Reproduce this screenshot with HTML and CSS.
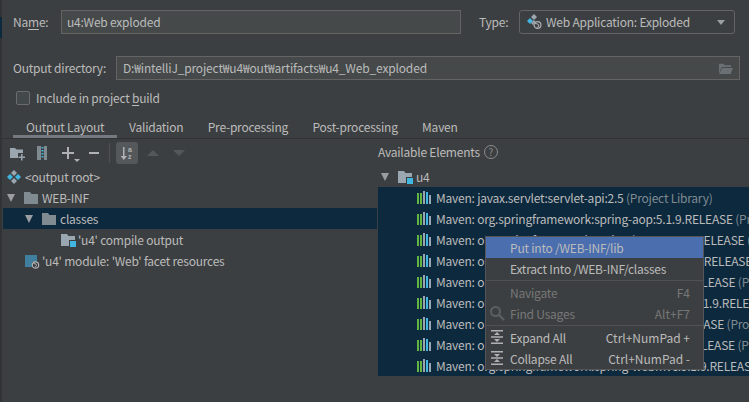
FILE: index.html
```html
<!DOCTYPE html>
<html lang="en">
<head>
<meta charset="utf-8">
<title>Artifact</title>
<link rel="stylesheet" href="styles.css">
</head>
<body>
<div class="page">
  <div class="strip"><div class="strip-sel"></div></div>
  <div class="main">
    <div class="row row-name">
      <label class="lbl lbl-name">Na<u>m</u>e:</label>
      <div class="field field-name">u4:Web exploded</div>
      <label class="lbl lbl-type">Type:</label>
      <div class="combo">
        <svg class="ic16" viewBox="0 0 16 16"><path d="M5 2l3 3-3 3-3-3z" fill="#40b6e0" transform="translate(-1 2)"/><path d="M8 0l3 3-3 3-3-3z" fill="#9aa7b0"/><path d="M8 6l3 3-3 3-3-3z" fill="#9aa7b0"/><circle cx="11.5" cy="11" r="4.2" fill="#3c3f41"/><circle cx="11.5" cy="11" r="3.4" fill="none" stroke="#afb1b3" stroke-width="1.2"/><path d="M9 9.5l3 .5 1 2-2 1.5" fill="none" stroke="#afb1b3"/></svg>
        <span class="combo-text">Web Application: Exploded</span>
        <span class="combo-arrow"></span>
      </div>
    </div>
    <div class="row row-dir">
      <label class="lbl lbl-dir">Output directory:</label>
      <div class="field field-dir">
        <span class="grow path">D:₩intelliJ_project₩u4₩out₩artifacts₩u4_Web_exploded</span>
        <svg class="folder-open" viewBox="0 0 16 14"><path d="M1 2h5l1 1.500h7v2H4L1 12z" fill="#6b7075"/><path d="M4.500 6.500H16L13.500 13H1z" fill="#6b7075"/></svg>
      </div>
    </div>
    <div class="row row-check">
      <span class="check"></span>
      <span class="check-text">Include in project <u>b</u>uild</span>
    </div>
    <div class="tabs">
      <span class="tab tab-on">Output Layout</span>
      <span class="tab">Validation</span>
      <span class="tab">Pre-processing</span>
      <span class="tab">Post-processing</span>
      <span class="tab">Maven</span>
    </div>
    <div class="panes">
      <div class="left">
        <div class="toolbar">
          <svg class="ic16" viewBox="0 0 16 16"><path d="M1 3h5l1.500 1.500H14V8H9v5H1z" fill="#9aa7b0"/><path d="M12 9v2.500h-2.500V13H12v2.500h1.500V13H16v-1.500h-2.500V9z" fill="#9aa7b0"/></svg>
          <svg class="ic16 t-zip" viewBox="0 0 16 16"><path d="M3 1h4v14H3zM10 1h3v14h-3z" fill="#7f8b91"/><path d="M7 1h3v14H7z" fill="#3c3f41"/><path d="M7.500 2h2v1.500h-2zM7.500 5h2v1.500h-2zM7.500 8h2v1.500h-2zM7.500 11h2v1.500h-2z" fill="#40b6e0"/></svg>
          <span class="t-add"><svg class="ic16" viewBox="0 0 16 16"><path d="M7 2h2v5h5v2H9v5H7V9H2V7h5z" fill="#afb1b3"/></svg><i class="mini-arrow"></i></span>
          <svg class="ic16 t-minus" viewBox="0 0 16 16"><path d="M3 7h10v2H3z" fill="#afb1b3"/></svg>
          <span class="t-sep"></span>
          <span class="t-sort"><svg class="ic16" viewBox="0 0 16 16"><path d="M4 2h1.500v9H8l-3.200 4L1.600 11H4z" fill="#afb1b3"/><text x="9" y="7" class="az">a</text><text x="9" y="14" class="az">z</text></svg></span>
          <svg class="ic16 t-up" viewBox="0 0 16 16"><path d="M2 11l6-6 6 6z" fill="#55585a"/></svg>
          <svg class="ic16 t-down" viewBox="0 0 16 16"><path d="M2 5l6 6 6-6z" fill="#55585a"/></svg>
        </div>
        <div class="tree">
          <div class="node node-root">
            <svg class="ic16" viewBox="0 0 16 16"><path d="M4 5l3 3-3 3-3-3z" fill="#40b6e0"/><path d="M12 5l3 3-3 3-3-3z" fill="#40b6e0"/><path d="M8 1l3 3-3 3-3-3z" fill="#9aa7b0"/><path d="M8 9l3 3-3 3-3-3z" fill="#9aa7b0"/></svg>
            <span>&lt;output root&gt;</span>
          </div>
          <div class="node node-web">
            <i class="tw"></i>
            <svg class="ic16 folder" viewBox="0 0 16 16"><path d="M1 2h6l1.500 2H15v10H1z" fill="#7f8b91"/></svg>
            <span>WEB-INF</span>
          </div>
          <div class="node node-sel">
            <i class="tw"></i>
            <svg class="ic16 folder" viewBox="0 0 16 16"><path d="M1 2h6l1.500 2H15v10H1z" fill="#7f8b91"/></svg>
            <span>classes</span>
          </div>
          <div class="node ind2">
            <svg class="ic16" viewBox="0 0 16 16"><path d="M1 2h6l1.500 2H15v4H9v6H1z" fill="#9aa7b0"/><path d="M10 9h6v6h-6z" fill="#40b6e0"/></svg>
            <span>'u4' compile output</span>
          </div>
          <div class="node ind-mod">
            <svg class="ic16" viewBox="0 0 16 16"><path d="M1 2h12v7H8v5H1z" fill="#40809e"/><circle cx="11.500" cy="12" r="3.200" fill="none" stroke="#afb1b3" stroke-width="1.200"/><path d="M9.500 10.500l2.500.5.500 1.500-1.500 2" fill="none" stroke="#afb1b3"/></svg>
            <span>'u4' module: 'Web' facet resources</span>
          </div>
        </div>
      </div>
      <div class="right">
        <div class="avail">
          <span>Available Elements</span>
          <span class="help">?</span>
        </div>
        <div class="node node-u4">
          <i class="tw"></i>
          <svg class="ic16 folder" viewBox="0 0 16 16"><path d="M1 2h6l1.500 2H15v4H9v6H1z" fill="#9aa7b0"/><path d="M10 9h6v6h-6z" fill="#40b6e0"/></svg>
          <span>u4</span>
        </div>
        <div class="libs" id="libs">
          <div class="lib"><svg class="bars" viewBox="0 0 15 13"><use href="#b"/></svg><span>Maven: javax.servlet:servlet-api:2.5 <em>(Project Library)</em></span></div>
          <div class="lib"><svg class="bars" viewBox="0 0 15 13"><use href="#b"/></svg><span>Maven: org.springframework:spring-aop:5.1.9.RELEASE <em>(Project Library)</em></span></div>
          <div class="lib"><svg class="bars" viewBox="0 0 15 13"><use href="#b"/></svg><span>Maven: org.springframework:spring-beans:5.1.9.RELEASE <em>(Project Library)</em></span></div>
          <div class="lib"><svg class="bars" viewBox="0 0 15 13"><use href="#b"/></svg><span>Maven: org.springframework:spring-context:5.1.9.RELEASE <em>(Project Library)</em></span></div>
          <div class="lib"><svg class="bars" viewBox="0 0 15 13"><use href="#b"/></svg><span>Maven: org.springframework:spring-core:5.1.9.RELEASE <em>(Project Library)</em></span></div>
          <div class="lib"><svg class="bars" viewBox="0 0 15 13"><use href="#b"/></svg><span>Maven: org.springframework:spring-expression:5.1.9.RELEASE <em>(Project Library)</em></span></div>
          <div class="lib"><svg class="bars" viewBox="0 0 15 13"><use href="#b"/></svg><span>Maven: org.springframework:spring-jcl:5.1.9.RELEASE <em>(Project Library)</em></span></div>
          <div class="lib"><svg class="bars" viewBox="0 0 15 13"><use href="#b"/></svg><span>Maven: org.springframework:spring-web:5.1.9.RELEASE <em>(Project Library)</em></span></div>
          <div class="lib"><svg class="bars" viewBox="0 0 15 13"><use href="#b"/></svg><span>Maven: org.springframework:spring-webmvc:5.1.9.RELEASE <em>(Project Library)</em></span></div>
        </div>
      </div>
    </div>
  </div>
  <div class="menu">
    <div class="mi mi-on"><span class="mi-label">Put into /WEB-INF/lib</span></div>
    <div class="mi"><span class="mi-label">Extract Into /WEB-INF/classes</span></div>
    <div class="msep"></div>
    <div class="mi mi-off"><span class="mi-label">Navigate</span><span class="key">F4</span></div>
    <div class="mi mi-off">
      <svg class="mi-ic" viewBox="0 0 16 16"><circle cx="6.500" cy="6.500" r="4.500" fill="none" stroke="#5c5f61" stroke-width="2"/><path d="M10 10l5 5" stroke="#5c5f61" stroke-width="2.400"/></svg>
      <span class="mi-label">Find Usages</span><span class="key">Alt+F7</span>
    </div>
    <div class="msep"></div>
    <div class="mi">
      <svg class="mi-ic" viewBox="0 0 16 16"><path d="M2 1h12v1.500H2zM2 13.500h12V15H2zM2 7.300h12v1.400H2zM8 3l3 3H5zM8 13l-3-3h6z" fill="#afb1b3"/></svg>
      <span class="mi-label">Expand All</span><span class="key">Ctrl+NumPad +</span>
    </div>
    <div class="mi">
      <svg class="mi-ic" viewBox="0 0 16 16"><path d="M2 1h12v1.500H2zM2 13.500h12V15H2zM2 7.300h12v1.400H2zM8 7L5 4h6zM8 9l3 3H5z" fill="#afb1b3"/></svg>
      <span class="mi-label">Collapse All</span><span class="key">Ctrl+NumPad -</span>
    </div>
  </div>
</div>
<svg class="defs" width="0" height="0"><defs><g id="b"><path d="M0 2h2v11H0z" fill="#62b543"/><path d="M3 2h2v11H3z" fill="#62b543"/><path d="M6 0h2v13H6z" fill="#9aa7b0"/><path d="M9 1h2v12H9z" fill="#40b6e0"/><path d="M12 4h2v9h-2z" fill="#9aa7b0"/></g></defs></svg>
</body>
</html>
```
FILE: styles.css
```css
html, body { margin: 0; padding: 0; }
body {
  width: 749px; height: 402px; overflow: hidden;
  background: #3c3f41; color: #bbbbbb;
  font: 12px/16px "Noto Sans CJK KR", "Noto Sans", sans-serif;
  letter-spacing: -0.22px;
}
.page { position: relative; display: flex; width: 749px; height: 402px; overflow: hidden; }
.defs { position: absolute; }
.strip { width: 2px; flex: none; background: #313335; }
.strip-sel { height: 21px; margin-top: 17px; background: #0d293e; }
.main { flex: 1; min-width: 0; display: flex; flex-direction: column; }
.row { display: flex; align-items: center; }
.lbl { flex: none; }
u { text-underline-offset: 2px; }
.row-name { height: 24px; margin-top: 10px; padding-left: 11px; }
.lbl-name { width: 40px; }
.field { box-sizing: border-box; height: 24px; background: #45494a; border: 1px solid #646464; padding-left: 6px; display: flex; align-items: center; }
.field-name { width: 400px; margin-left: 8px; padding-left: 5px; }
.lbl-type { margin-left: 18px; width: 40px; }
.combo { box-sizing: border-box; width: 216px; height: 24px; border: 1px solid #646464; border-radius: 3px; display: flex; align-items: center; padding-left: 6px; gap: 4px; background: #3c3f41; }
.combo-text { flex: 1; }
.combo-arrow { width: 0; height: 0; border: 4px solid transparent; border-top: 5px solid #9a9da1; border-bottom: 0; margin-right: 9px; border-left-width: 4.500px; border-right-width: 4.500px; }
.ic16 { width: 16px; height: 16px; flex: none; display: block; }
.row-dir { height: 24px; margin-top: 22px; padding-left: 11px; }
.lbl-dir { width: 103px; }
.field-dir { width: 624px; padding-right: 6px; }
.grow { flex: 1; }
.path { letter-spacing: -0.16px; }
.folder-open { width: 15px; height: 13px; display: block; }
.row-check { height: 22px; margin-top: 7px; padding-left: 14px; }
.check { box-sizing: border-box; width: 14px; height: 14px; border: 1px solid #6b6b6b; border-radius: 2px; background: #43494a; margin-right: 6px; flex: none; }
.tabs { display: flex; height: 24px; padding-left: 11px; margin-top: 6px; box-sizing: border-box; border-bottom: 1px solid #323232; position: relative; }
.tab { padding: 0 12.2px; line-height: 23px; white-space: nowrap; }
.tab-on { padding: 0 13px; margin-right: -0.5px; box-shadow: inset 0 -3px 0 #747a80; }
.panes { display: flex; flex: 1; min-height: 0; }
.left { width: 375px; flex: none; box-sizing: border-box; }
.toolbar { height: 27px; display: flex; align-items: center; padding-left: 7px; }
.t-zip { margin-left: 9px; }
.t-add { position: relative; margin-left: 10px; display: block; }
.mini-arrow { position: absolute; right: -4px; bottom: -1px; width: 0; height: 0; border: 3px solid transparent; border-top: 3px solid #afb1b3; border-bottom: 0; }
.t-minus { margin-left: 10px; }
.t-sep { width: 1px; height: 20px; background: #515151; margin-left: 7px; margin-right: 6px; }
.t-sort { width: 22px; height: 22px; background: #55585a; border-radius: 3px; display: flex; align-items: center; justify-content: center; }
.az { font: bold 7px "Liberation Sans", sans-serif; fill: #afb1b3; }
.t-up { margin-left: 7px; }
.t-down { margin-left: 10px; }
.tree { display: flex; flex-direction: column; }
.node { height: 21px; display: flex; align-items: center; white-space: nowrap; gap: 3px; }
.tw { width: 0; height: 0; border: 4.5px solid transparent; border-top: 8px solid #9a9da1; border-bottom: 0; flex: none; margin-right: 5px; }
.node-root { padding-left: 4px; }
.node-web { padding-left: 5px; }
.node-sel { background: #0d293e; margin-left: 1px; padding-left: 22px; }
.ind2 { padding-left: 58px; gap: 2px; }
.ind-mod { padding-left: 22px; gap: 2px; }
.right { flex: 1; min-width: 0; }
.avail { height: 26px; display: flex; align-items: center; padding-left: 1px; gap: 4px; }
.help { box-sizing: border-box; width: 14px; height: 14px; border: 1px solid #8c8c8c; border-radius: 50%; font-size: 10px; line-height: 12px; text-align: center; color: #8c8c8c; }
.node-u4 { padding-left: 4px; height: 20px; margin-top: 2px; }
.libs { background: #0d293e; height: 189px; overflow: hidden; margin-left: 1px; }
.lib { height: 21px; display: flex; align-items: center; white-space: nowrap; padding-left: 39px; gap: 4px; }
.bars { width: 15px; height: 13px; flex: none; display: block; }
em { font-style: normal; color: #7f8b91; }
.menu { position: absolute; left: 485px; top: 236px; width: 219px; box-sizing: border-box; background: #3c3f41; border: 1px solid #555555; display: flex; flex-direction: column; }
.mi { height: 21px; display: flex; align-items: center; padding: 0 13px 0 24px; position: relative; white-space: nowrap; }
.mi-on { background: #4b6eaf; }
.mi-off { color: #777777; }
.mi-label { flex: 1; }
.key { letter-spacing: 0; }
.mi-ic { position: absolute; left: 3px; top: 2px; width: 16px; height: 16px; }
.msep { height: 1px; background: #515151; margin: 1px 0 1px; }
```
